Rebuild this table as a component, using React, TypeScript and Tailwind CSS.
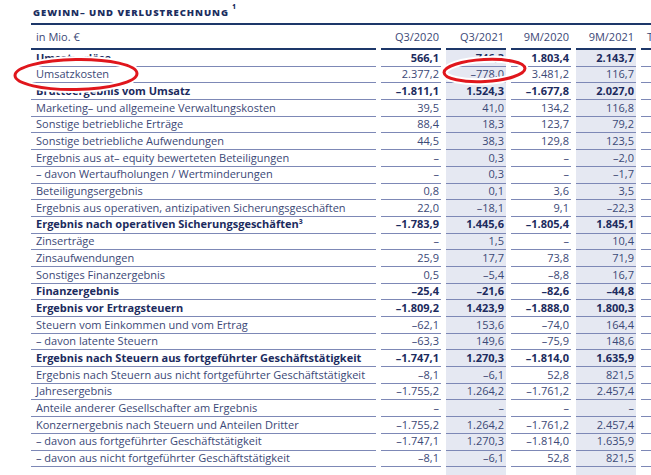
import React from "react";

type Row = { label: string; v: string[]; bold?: boolean };

const rows: Row[] = [
  { label: "Umsatzerlöse", v: ["566,1", "746,3", "1.803,4", "2.143,7"], bold: true },
  { label: "Umsatzkosten", v: ["2.377,2", "–778,0", "3.481,2", "116,7"] },
  { label: "Bruttoergebnis vom Umsatz", v: ["–1.811,1", "1.524,3", "–1.677,8", "2.027,0"], bold: true },
  { label: "Marketing– und allgemeine Verwaltungskosten", v: ["39,5", "41,0", "134,2", "116,8"] },
  { label: "Sonstige betriebliche Erträge", v: ["88,4", "18,3", "123,7", "79,2"] },
  { label: "Sonstige betriebliche Aufwendungen", v: ["44,5", "38,3", "129,8", "123,5"] },
  { label: "Ergebnis aus at– equity bewerteten Beteiligungen", v: ["–", "0,3", "–", "–2,0"] },
  { label: "– davon Wertaufholungen / Wertminderungen", v: ["–", "0,3", "–", "–1,7"] },
  { label: "Beteiligungsergebnis", v: ["0,8", "0,1", "3,6", "3,5"] },
  { label: "Ergebnis aus operativen, antizipativen Sicherungsgeschäften", v: ["22,0", "–18,1", "9,1", "–22,3"] },
  { label: "Ergebnis nach operativen Sicherungsgeschäften³", v: ["–1.783,9", "1.445,6", "–1.805,4", "1.845,1"], bold: true },
  { label: "Zinserträge", v: ["–", "1,5", "–", "10,4"] },
  { label: "Zinsaufwendungen", v: ["25,9", "17,7", "73,8", "71,9"] },
  { label: "Sonstiges Finanzergebnis", v: ["0,5", "–5,4", "–8,8", "16,7"] },
  { label: "Finanzergebnis", v: ["–25,4", "–21,6", "–82,6", "–44,8"], bold: true },
  { label: "Ergebnis vor Ertragsteuern", v: ["–1.809,2", "1.423,9", "–1.888,0", "1.800,3"], bold: true },
  { label: "Steuern vom Einkommen und vom Ertrag", v: ["–62,1", "153,6", "–74,0", "164,4"] },
  { label: "– davon latente Steuern", v: ["–63,3", "149,6", "–75,9", "148,6"] },
  { label: "Ergebnis nach Steuern aus fortgeführter Geschäftstätigkeit", v: ["–1.747,1", "1.270,3", "–1.814,0", "1.635,9"], bold: true },
  { label: "Ergebnis nach Steuern aus nicht fortgeführter Geschäftstätigkeit", v: ["–8,1", "–6,1", "52,8", "821,5"] },
  { label: "Jahresergebnis", v: ["–1.755,2", "1.264,2", "–1.761,2", "2.457,4"] },
  { label: "Anteile anderer Gesellschafter am Ergebnis", v: ["–", "–", "–", "–"] },
  { label: "Konzernergebnis nach Steuern und Anteilen Dritter", v: ["–1.755,2", "1.264,2", "–1.761,2", "2.457,4"] },
  { label: "– davon aus fortgeführter Geschäftstätigkeit", v: ["–1.747,1", "1.270,3", "–1.814,0", "1.635,9"] },
  { label: "– davon aus nicht fortgeführter Geschäftstätigkeit", v: ["–8,1", "–6,1", "52,8", "821,5"] },
];

const headers = ["Q3/2020", "Q3/2021", "9M/2020", "9M/2021"];
const shaded = [false, true, false, true];

export default function App() {
  return (
    <div
      className="relative w-[651px] h-[475px] overflow-hidden bg-white"
      style={{ fontFamily: "'Open Sans', Lato, sans-serif" }}
    >
      <div className="pl-[31px]">
        <div className="h-[23px] pl-[2px] pt-[7px] text-[9.5px] font-extrabold leading-[12px] tracking-[0.1em] text-[#1c2e60] whitespace-nowrap">
          GEWINN– UND VERLUSTRECHNUNG <sup className="text-[6px] align-[4px]">1</sup>
        </div>
        <div className="h-[2px] w-[640px] bg-[#1d3769]" />
        <div className="grid grid-cols-[345px_60px_60px_60px_60px_60px] gap-x-[5px] w-[700px] text-[11px] whitespace-nowrap">
          {/* header */}
          <div className="h-[25px] pt-[2px] pl-[5px] flex items-center border-b-2 border-[#1d3769] text-[#3b4876]">in Mio. €</div>
          {headers.map((h) => (
            <div key={h} className="h-[25px] pt-[2px] pr-[2px] flex items-center justify-end border-b-2 border-[#1d3769] text-[#3b4876]">
              {h}
            </div>
          ))}
          <div className="h-[25px] pt-[2px] pl-[6px] flex items-center border-b-2 border-[#1d3769] text-[#3b4876]">T</div>
          {rows.map((r, i) => (
            <React.Fragment key={i}>
              <div
                className={`h-[16.7px] pl-[5px] flex items-center border-b border-[#7d88b6] ${
                  r.bold ? "font-bold text-[#1c2b5e]" : "text-[#3b4876]"
                }`}
              >
                {r.label}
              </div>
              {r.v.map((val, j) => (
                <div
                  key={j}
                  className={`h-[16.7px] pr-[2px] flex items-center justify-end border-b border-[#7d88b6] ${
                    shaded[j] ? "bg-[#e5e8f2]" : ""
                  } ${r.bold ? "font-bold text-[#1c2b5e]" : "text-[#3b4876]"}`}
                >
                  {val}
                </div>
              ))}
              <div className="h-[16.7px] border-b border-[#7d88b6]" />
            </React.Fragment>
          ))}
          <div className="h-[16px]" />
          <div className="h-[16px]" />
          <div className="h-[16px] bg-[#e5e8f2]" />
          <div className="h-[16px]" />
          <div className="h-[16px] bg-[#e5e8f2]" />
          <div className="h-[16px]" />
        </div>
      </div>
      <svg
        className="absolute inset-0 pointer-events-none"
        width="651"
        height="475"
        viewBox="0 0 651 475"
      >
        <ellipse cx="76" cy="74.5" rx="61" ry="15" fill="none" stroke="#ffffff" strokeWidth="7" transform="rotate(-1 76 74.5)" />
        <ellipse cx="76" cy="74.5" rx="61" ry="15" fill="none" stroke="#e0161c" strokeWidth="3" transform="rotate(-1 76 74.5)" />
        <ellipse cx="484.5" cy="70.5" rx="40.5" ry="11" fill="none" stroke="#ffffff" strokeWidth="7" transform="rotate(-3 484.5 70.5)" />
        <ellipse cx="484.5" cy="70.5" rx="40.5" ry="11" fill="none" stroke="#e0161c" strokeWidth="3" transform="rotate(-3 484.5 70.5)" />
      </svg>
    </div>
  );
}
